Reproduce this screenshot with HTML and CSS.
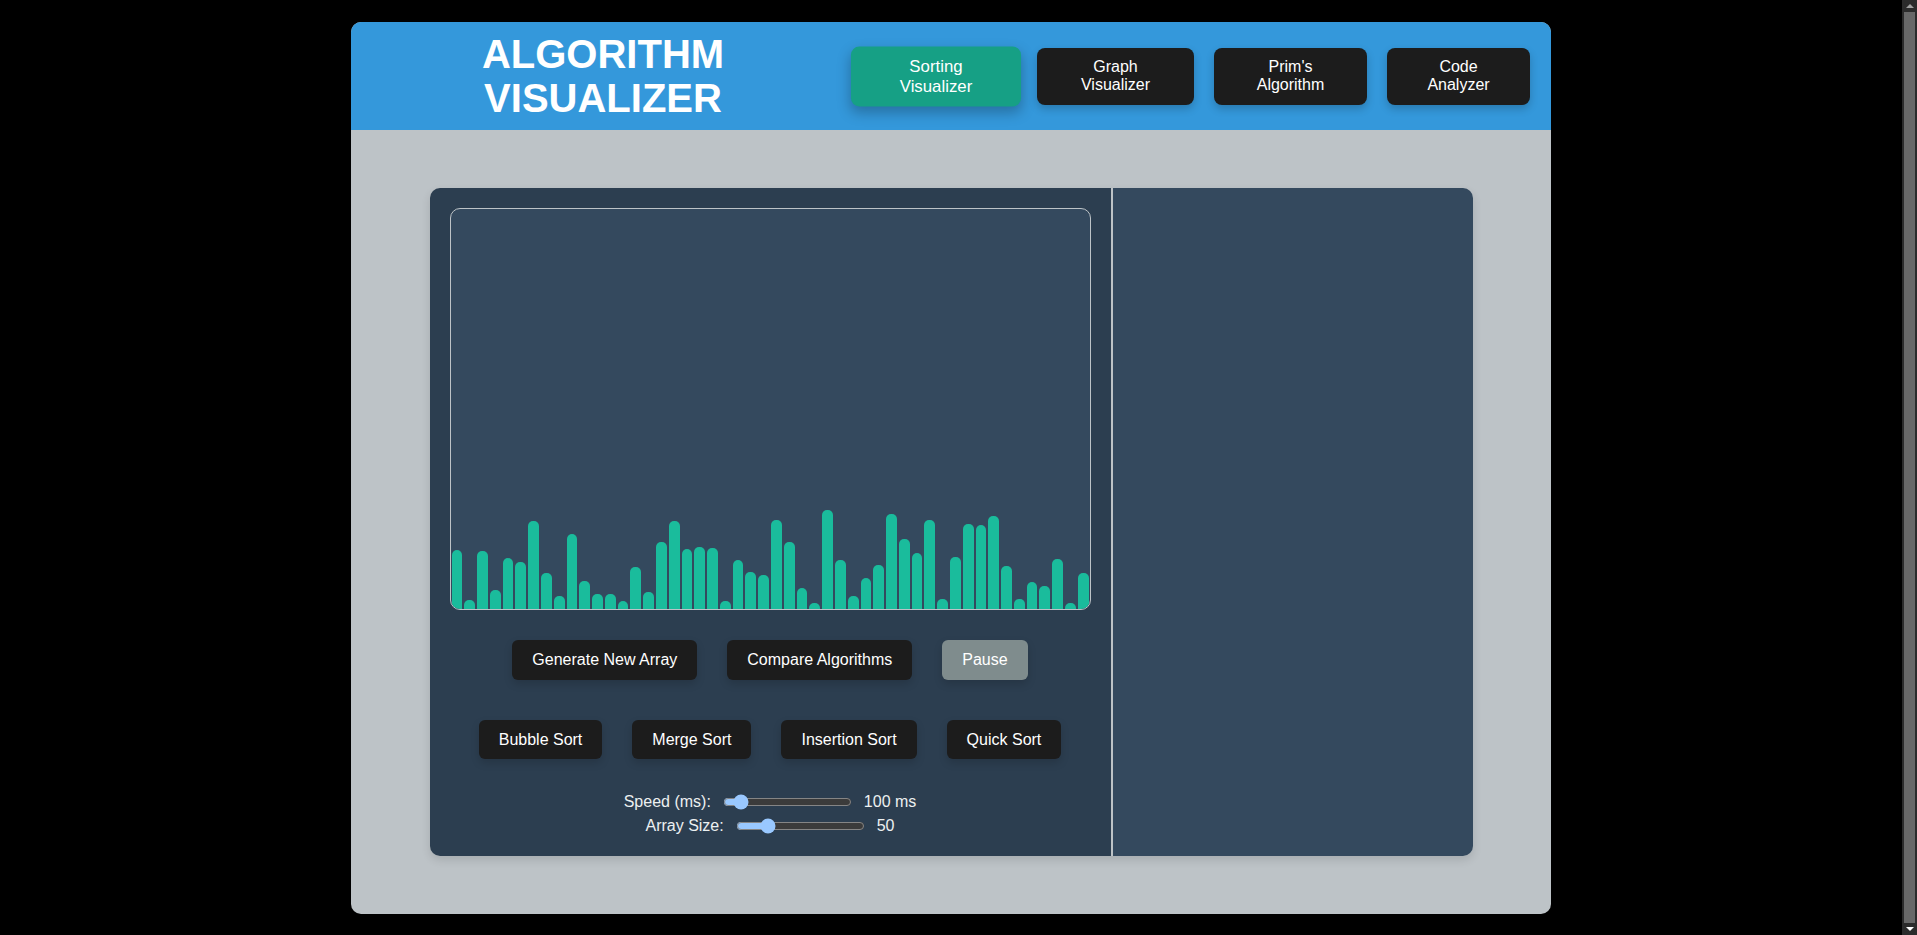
FILE: index.html
```html
<!DOCTYPE html>
<html lang="en">
<head>
<meta charset="utf-8">
<title>Algorithm Visualizer</title>
<link rel="stylesheet" href="styles.css">
</head>
<body>
<div class="app">
  <header class="header">
    <h1 class="title">ALGORITHM<br>VISUALIZER</h1>
    <nav class="nav">
      <button class="nav-btn nav-sorting active">Sorting<br>Visualizer</button>
      <button class="nav-btn nav-graph">Graph<br>Visualizer</button>
      <button class="nav-btn nav-prim">Prim's<br>Algorithm</button>
      <button class="nav-btn nav-code">Code<br>Analyzer</button>
    </nav>
  </header>
  <main class="main">
    <section class="panel">
      <div class="viz-side">
        <div class="bars">
          <div class="bar" style="height:59px"></div>
          <div class="bar" style="height:9px"></div>
          <div class="bar" style="height:58px"></div>
          <div class="bar" style="height:19px"></div>
          <div class="bar" style="height:51px"></div>
          <div class="bar" style="height:47px"></div>
          <div class="bar" style="height:88px"></div>
          <div class="bar" style="height:36px"></div>
          <div class="bar" style="height:13px"></div>
          <div class="bar" style="height:75px"></div>
          <div class="bar" style="height:28px"></div>
          <div class="bar" style="height:15px"></div>
          <div class="bar" style="height:15px"></div>
          <div class="bar" style="height:8px"></div>
          <div class="bar" style="height:42px"></div>
          <div class="bar" style="height:17px"></div>
          <div class="bar" style="height:67px"></div>
          <div class="bar" style="height:88px"></div>
          <div class="bar" style="height:60px"></div>
          <div class="bar" style="height:62px"></div>
          <div class="bar" style="height:61px"></div>
          <div class="bar" style="height:8px"></div>
          <div class="bar" style="height:49px"></div>
          <div class="bar" style="height:37px"></div>
          <div class="bar" style="height:34px"></div>
          <div class="bar" style="height:89px"></div>
          <div class="bar" style="height:67px"></div>
          <div class="bar" style="height:21px"></div>
          <div class="bar" style="height:6px"></div>
          <div class="bar" style="height:99px"></div>
          <div class="bar" style="height:49px"></div>
          <div class="bar" style="height:13px"></div>
          <div class="bar" style="height:31px"></div>
          <div class="bar" style="height:44px"></div>
          <div class="bar" style="height:95px"></div>
          <div class="bar" style="height:70px"></div>
          <div class="bar" style="height:56px"></div>
          <div class="bar" style="height:89px"></div>
          <div class="bar" style="height:10px"></div>
          <div class="bar" style="height:52px"></div>
          <div class="bar" style="height:85px"></div>
          <div class="bar" style="height:84px"></div>
          <div class="bar" style="height:93px"></div>
          <div class="bar" style="height:43px"></div>
          <div class="bar" style="height:10px"></div>
          <div class="bar" style="height:27px"></div>
          <div class="bar" style="height:23px"></div>
          <div class="bar" style="height:50px"></div>
          <div class="bar" style="height:6px"></div>
          <div class="bar" style="height:36px"></div>
        </div>
        <div class="controls controls-main">
          <button class="btn">Generate New Array</button>
          <button class="btn">Compare Algorithms</button>
          <button class="btn btn-pause">Pause</button>
        </div>
        <div class="controls controls-algo">
          <button class="btn">Bubble Sort</button>
          <button class="btn">Merge Sort</button>
          <button class="btn">Insertion Sort</button>
          <button class="btn">Quick Sort</button>
        </div>
        <div class="sliders">
          <div class="slider-row">
            <label class="slider-label" for="speed">Speed (ms):</label>
            <input class="slider" id="speed" type="range" min="10" max="1000" value="100">
            <span class="slider-value">100 ms</span>
          </div>
          <div class="slider-row">
            <label class="slider-label" for="size">Array Size:</label>
            <input class="slider" id="size" type="range" min="10" max="200" value="50">
            <span class="slider-value">50</span>
          </div>
        </div>
      </div>
      <div class="side"></div>
    </section>
  </main>
</div>
<div class="scrollbar" aria-hidden="true">
  <div class="scroll-arrow scroll-up"></div>
  <div class="scroll-thumb"></div>
  <div class="scroll-arrow scroll-down"></div>
</div>
</body>
</html>
```
FILE: styles.css
```css
:root {
  color-scheme: dark;
}

* {
  box-sizing: border-box;
}

body {
  margin: 0;
  padding: 22px 15px 28px 0;
  background: #000;
  font-family: "Liberation Sans", Arial, sans-serif;
  color: #ecf0f1;
}

.app {
  width: 1200px;
  margin: 0 auto;
  border-radius: 10px;
  overflow: hidden;
  background: #bdc3c7;
}

.header {
  display: flex;
  align-items: center;
  gap: 20px;
  padding: 10px 21px 10px 20px;
  background: #3498db;
}

.title {
  flex: 1;
  margin: 0;
  text-align: center;
  font-size: 40px;
  line-height: 1.1;
  font-weight: bold;
  color: #fff;
}

.nav {
  display: flex;
  gap: 20px;
}

.nav-btn {
  height: 57px;
  border: none;
  border-radius: 8px;
  background: #1c1c1c;
  color: #fff;
  font-family: "Liberation Sans", Arial, sans-serif;
  font-size: 16px;
  line-height: 1.15;
  padding: 0 10px;
  box-shadow: 0 4px 8px rgba(0, 0, 0, 0.2);
  cursor: pointer;
}

.nav-sorting { width: 162px; }
.nav-graph { width: 157px; }
.nav-prim { width: 153px; }
.nav-code { width: 143px; }

.nav-btn.active {
  background: #16a085;
  transform: scale(1.05);
  box-shadow: 0 6px 12px rgba(0, 0, 0, 0.25);
}

.main {
  padding: 58px 0 58px;
}

.panel {
  display: flex;
  width: 1043px;
  height: 668px;
  margin: 0 auto;
  border-radius: 10px;
  overflow: hidden;
  box-shadow: 0 4px 10px rgba(0, 0, 0, 0.12);
}

.viz-side {
  width: 681px;
  padding: 20px;
  background: #2c3e50;
}

.side {
  flex: 1;
  background: #34495e;
  border-left: 2px solid #bdc3c7;
}

.bars {
  display: flex;
  align-items: flex-end;
  height: 402px;
  border: 1px solid #bdc3c7;
  border-radius: 10px;
  background: #34495e;
  overflow: hidden;
}

.bar {
  flex: 1;
  margin: 0 1px;
  background: #1abc9c;
  border-radius: 5px 5px 0 0;
}

.controls {
  display: flex;
  justify-content: center;
  gap: 30px;
}

.controls-main {
  margin-top: 30px;
}

.controls-algo {
  margin-top: 40px;
}

.btn {
  height: 40px;
  padding: 0 20px;
  border: none;
  border-radius: 6px;
  background: #1c1c1c;
  color: #fff;
  font-family: "Liberation Sans", Arial, sans-serif;
  font-size: 16px;
  box-shadow: 0 4px 8px rgba(0, 0, 0, 0.15);
  cursor: pointer;
}

.controls-algo .btn {
  height: 39px;
}

.btn-pause {
  background: #7f8c8d;
}

.sliders {
  display: flex;
  flex-direction: column;
  align-items: center;
  gap: 4px;
  margin-top: 33px;
}

.slider-row {
  display: flex;
  align-items: center;
  justify-content: center;
  gap: 10px;
  height: 20px;
  font-size: 16px;
  color: #ecf0f1;
}

.slider {
  margin: 2px;
}

.scrollbar {
  position: fixed;
  top: 0;
  right: 0;
  bottom: 0;
  width: 15px;
  display: flex;
  flex-direction: column;
  background: #2b2b2b;
}

.scroll-arrow {
  height: 12px;
  display: flex;
  justify-content: center;
  align-items: center;
}

.scroll-up::before,
.scroll-down::before {
  content: "";
  border-left: 4px solid transparent;
  border-right: 4px solid transparent;
}

.scroll-up::before {
  border-bottom: 4px solid #a0a0a0;
}

.scroll-down::before {
  border-top: 4px solid #ffffff;
}

.scroll-thumb {
  flex: 1;
  margin: 0 2px;
  background: #686868;
}
```
